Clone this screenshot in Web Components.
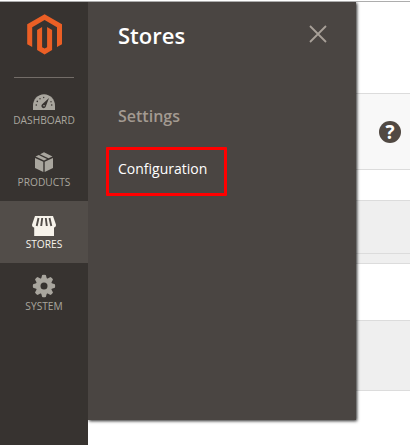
<!DOCTYPE html>
<html lang="en">
<head>
<meta charset="utf-8">
<title>Stores</title>
<style>
html,body{margin:0;height:100%;overflow:hidden;background:#fff}
body{font-family:"Open Sans","Noto Sans",sans-serif}
</style>
</head>
<body>
<admin-app></admin-app>
<script>
const define = (name, html) => {
  const t = document.createElement('template');
  t.innerHTML = html;
  customElements.define(name, class extends HTMLElement {
    constructor() {
      super();
      this.attachShadow({mode: 'open'}).append(t.content.cloneNode(true));
    }
  });
};

define('brand-logo', `
<style>:host{display:flex;justify-content:center;box-sizing:border-box;height:75px;padding:12px 0 0 1px}svg{display:block}</style>
<svg width="36" height="42" viewBox="0 0 36 42" fill="#eb5f25"><path d="M17.6 .2 35 10.3V30.2L30 33.1V13.2L17.6 6 5.2 13.2V33.1L.2 30.2V10.3ZM10.1 16 15.1 13.1V33.2L17.6 34.6 20.1 33.2V13.1L25.1 16V36L17.6 40.5 10.1 36Z"/></svg>`);

define('menu-item', `
<style>
:host{display:flex;flex-direction:column;align-items:center;box-sizing:border-box;height:62px;padding-top:12px;color:#a9a69e}
:host([active]){background:#524d49;color:#f7f3eb}
.i{display:flex;height:24px;align-items:center;justify-content:center}
.t{font-size:10.2px;line-height:14px;white-space:nowrap}
</style>
<div class="i"><slot name="icon"></slot></div><div class="t"><slot></slot></div>`);

const tooth = [0,45,90,135,180,225,270,315]
  .map(a => `<path transform="rotate(${a})" d="M-3-7 -1.8-10.9Q0-11.5 1.8-10.9L3-7Z"/>`).join('');

define('side-nav', `
<style>
:host{display:block;width:88px;flex:none;background:#373330}
hr{border:0;height:1px;margin:0 14px;background:#736d68}
svg{display:block}
.first{height:61px;padding-top:11px}
.first svg{margin-top:2px}
.box{margin-bottom:3px}
.shop{margin-top:2px}
.gear{margin-bottom:2px}
</style>
<brand-logo></brand-logo><hr>
<menu-item class="first">
 <svg slot="icon" width="24" height="18" viewBox="0 0 24 18"><path fill="#a9a69e" d="M1 17V12.5C1 6.2 5.8 1.2 12 1.2S23 6.2 23 12.5V17Z"/><g fill="#373330"><circle cx="4.3" cy="12" r=".8"/><circle cx="5.3" cy="8.4" r=".8"/><circle cx="8" cy="5.7" r=".7"/><circle cx="11.7" cy="4.5" r=".7"/><circle cx="19.7" cy="12" r=".8"/><circle cx="19" cy="8.7" r=".7"/><path d="M17 5 10.2 11.3A2.2 2.2 0 1 0 13.7 13.7Z"/></g><circle cx="12" cy="12.8" r=".8" fill="#a9a69e"/></svg>DASHBOARD</menu-item>
<menu-item>
 <svg slot="icon" class="box" width="20" height="22" viewBox="0 0 20 22" fill="#a9a69e"><path d="M1 7 9.3 10.7V21L1 17.1ZM10.7 10.7 19 7V17.1L10.7 21ZM1.5 5.6 4.8 4 13 7.9 10 9.5ZM6.1 3.3 10 1.2 18.5 5.5 14.5 7.3Z"/></svg>PRODUCTS</menu-item>
<menu-item active>
 <svg slot="icon" class="shop" width="26" height="20" viewBox="0 0 26 20"><path fill="#f7f3eb" d="M4 0H22L25 8.7C25 10.7 24 11.3 23 11.4V20H3.2V11.4C2 11.3 1 10.7 1 8.7Z"/><path d="M7.5 2 5.7 10M11.2 2 10.2 10M14.8 2 15.8 10M18.5 2 20.3 10" fill="none" stroke="#524d49" stroke-width="1.9"/></svg>STORES</menu-item>
<menu-item>
 <svg slot="icon" class="gear" width="24" height="24" viewBox="-12 -12 24 24"><g fill="#a9a69e"><circle r="8"/>${tooth}</g><circle r="3.5" fill="#373330"/></svg>SYSTEM</menu-item>`);

define('nav-link', `
<style>
:host{display:block;box-sizing:border-box;width:121px;height:49px;margin-left:18px;border:3px solid #f00;border-radius:1px;padding:9px 0 0 9px;color:#fff;font-size:14px;line-height:20px;white-space:nowrap}
</style><slot></slot>`);

define('flyout-panel', `
<style>
:host{display:flex;flex-direction:column;width:268px;height:418px;flex:none;background:#4a4542;box-shadow:1px 1px 3px rgba(0,0,0,.85);clip-path:inset(0 -8px -8px 0)}
header{display:flex;justify-content:space-between;align-items:center;padding:18px 29px 0 30px;height:30px}
h1{margin:0;font-size:22px;line-height:30px;font-weight:600;color:#fff}
svg{display:block;margin-top:-2px}
h2{margin:55px 0 0 30px;font-size:16px;line-height:22px;height:22px;font-weight:600;color:#a39a91}
nav-link{margin-top:20px}
</style>
<header><h1><slot name="title"></slot></h1><svg width="18" height="18" viewBox="0 0 18 18" fill="none" stroke="#a8a098" stroke-width="1.8"><path d="M1 1 17 17M17 1 1 17"/></svg></header>
<h2><slot name="section"></slot></h2><nav-link><slot></slot></nav-link>`);

define('page-backdrop', `
<style>
:host{display:flex;flex-direction:column;flex:1;min-width:0}
div{box-sizing:border-box;flex:none;border-top:1px solid #dcdcdc}
.a{height:91px;border:0}
.b{height:76px;background:#f8f8f8;display:flex;align-items:center;justify-content:flex-end;padding:1px 9px 0 0}
.c{height:31px}.d{height:53px;background:#efefef}.e{height:10px;background:#efefef}
.f{height:57px}.g{height:70px;background:#efefef}.h{flex:1}
help-badge{flex:none}
</style>
<div class="a"></div><div class="b"><help-badge>?</help-badge></div><div class="c"></div><div class="d"></div><div class="e"></div><div class="f"></div><div class="g"></div><div class="h"></div>`);

define('help-badge', `
<style>:host{display:flex;align-items:center;justify-content:center;box-sizing:border-box;width:22px;height:22px;border-radius:50%;background:#514943;color:#fff;font:700 19px/22px "Open Sans",sans-serif}</style><slot></slot>`);

define('admin-app', `
<style>
:host{display:flex;box-sizing:border-box;width:410px;height:445px;padding-top:1px;flex-direction:column}
.top{height:1px;flex:none;background:#adadad}
.row{display:flex;flex:1;min-height:0}
flyout-panel{position:relative}
</style>
<div class="top"></div><div class="row"><side-nav></side-nav><flyout-panel><span slot="title">Stores</span><span slot="section">Settings</span>Configuration</flyout-panel><page-backdrop></page-backdrop></div>`);
</script>
</body>
</html>
